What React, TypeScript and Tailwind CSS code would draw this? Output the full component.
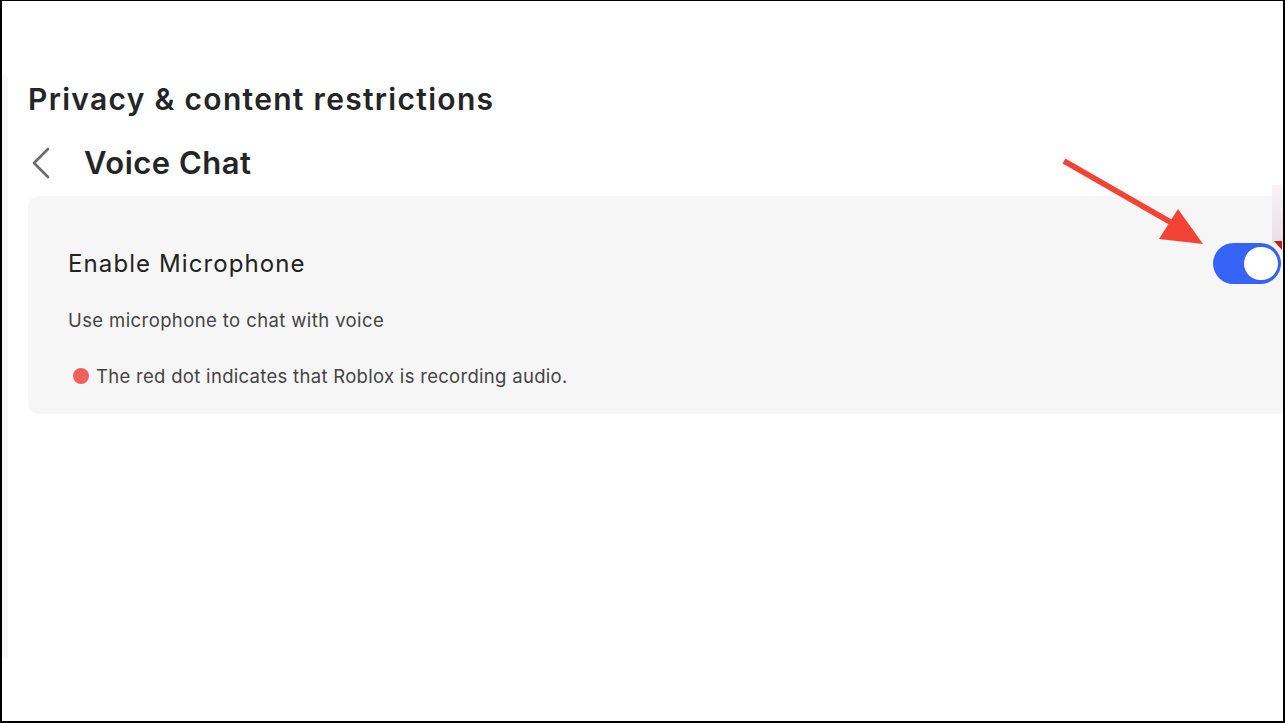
import React from 'react';

const Toggle: React.FC = () => (
  <div className="flex h-[41px] w-[68px] shrink-0 items-center justify-end rounded-full bg-[#3563f5] pr-[3px]">
    <div className="h-[33px] w-[34px] rounded-full bg-white"></div>
  </div>
);

const App: React.FC = () => {
  return (
    <div className="relative h-[723px] w-[1285px] overflow-hidden border-b-2 border-l-2 border-r-2 border-t border-black bg-white font-['Inter',sans-serif] text-[#232527]">
      {/* faint strip on the left edge */}
      <div className="absolute left-0 top-[74px] h-[582px] w-[6px] bg-[#f7f7f7]"></div>

      <div className="pl-[26px] pt-[78px]">
        <h1 className="text-[30px] font-semibold leading-[40px] tracking-[1.3px]">Privacy &amp; content restrictions</h1>

        {/* Sub header */}
        <div className="mt-[26px] flex h-[36px] items-center">
          <svg width="20" height="32" viewBox="0 0 20 32" className="ml-[3px]">
            <path d="M17 2 L3 16 L17 30" fill="none" stroke="#6b6b6b" strokeWidth="2.6" strokeLinecap="round" strokeLinejoin="round" />
          </svg>
          <h2 className="ml-[33px] text-[31px] font-semibold leading-[36px] tracking-[0.5px]">Voice Chat</h2>
        </div>

        {/* Card */}
        <div className="mt-[15px] w-[1290px] rounded-l-[10px] bg-[#f6f6f6] pb-[25px] pl-[40px] pt-[47px]">
          <div className="flex items-center justify-between pr-[37px]">
            <div className="text-[24px] leading-[40px] tracking-[1.1px] text-[#222]">Enable Microphone</div>
            <Toggle />
          </div>
          <div className="mt-[23px] text-[18.5px] leading-[26px] tracking-[0.4px] text-[#444]">Use microphone to chat with voice</div>
          <div className="mt-[30px] flex items-center text-[18.5px] leading-[26px] tracking-[0.3px] text-[#444]">
            <span className="ml-[5px] mr-[7px] inline-block h-[16px] w-[16px] rounded-full bg-[#ef625c]"></span>
            The red dot indicates that Roblox is recording audio.
          </div>
        </div>
      </div>

      {/* faint overlay fragment near the toggle */}
      <div className="absolute left-[1270px] top-[184px] h-[58px] w-[13px] bg-gradient-to-b from-[#f8f5f6] to-[#e9dde6]"></div>
      <div className="absolute left-[1272px] top-[240px] h-0 w-0 border-l-[8px] border-t-[9px] border-l-transparent border-t-[#c81818]"></div>

      {/* Annotation arrow */}
      <svg className="pointer-events-none absolute left-0 top-0" width="1285" height="723">
        <line x1="1062" y1="160" x2="1170" y2="222" stroke="#f44336" strokeWidth="5.5" />
        <polygon points="1176,208 1157,238 1201,243" fill="#f44336" />
      </svg>
    </div>
  );
};

export default App;
